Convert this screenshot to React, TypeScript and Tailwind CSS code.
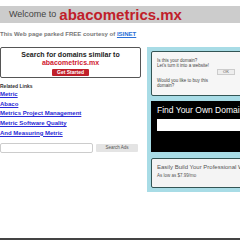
import React from 'react'

const links = ['Metric', 'Abaco', 'Metrics Project Management', 'Metric Software Quality', 'And Measuring Metric']

const App = () => {
    return (
        <div className="w-[240px] h-[240px] overflow-hidden bg-white relative" style={{ fontFamily: '"Liberation Sans", Arial, sans-serif' }}>
            <div className="w-[420px]">
                <div className="mt-[6px] h-[17px] bg-[#cccccc] flex items-center pl-[9px]">
                    <span className="text-[9px] text-[#444] leading-none">Welcome to</span>
                    <span className="text-[15px] font-bold text-[#c0202a] leading-none ml-[3px]">abacometrics.mx</span>
                </div>
                <div className="mt-[8px] text-[6px] font-bold text-[#777] leading-none">
                    This Web page parked FREE courtesy of <a href="#" className="text-[#2a6fd6] underline">ISINET</a>
                </div>
                <div className="flex mt-[10px]">
                    <div className="w-[141px] shrink-0">
                        <div className="h-[31px] border border-[#555] rounded-[2px] flex flex-col items-center pt-[3px]">
                            <span className="text-[7px] font-bold text-[#222] leading-[8px]">Search for domains similar to</span>
                            <span className="text-[7px] font-bold text-[#d02030] leading-[8px]">abacometrics.mx</span>
                            <button type="button" className="mt-[2px] bg-[#c0202a] text-white text-[5px] font-bold rounded-[1px] px-[5px] h-[7px] leading-none">Get Started</button>
                        </div>
                        <div className="mt-[6px] text-[5px] font-bold text-[#333] leading-none">Related Links</div>
                        <div className="flex flex-col gap-[3.7px] mt-[2px]">
                            {links.map((l) => (
                                <a key={l} href="#" className="text-[6px] font-bold text-[#2a2ad6] underline leading-[6px]">{l}</a>
                            ))}
                        </div>
                        <div className="flex items-center mt-[7px] gap-[3px]">
                            <div className="w-[93px] h-[10px] border border-[#ccc] rounded-[2px] bg-white" />
                            <button type="button" className="w-[42px] h-[8px] bg-[#e4e4e4] text-[4.5px] text-[#555] leading-none rounded-[1px]">Search Ads</button>
                        </div>
                    </div>
                    <div className="ml-[6px] w-[260px] h-[145px] bg-[#a8dce6] pt-[4px] pl-[4px]">
                        <div className="h-[45px] bg-[#f6f6f6] border border-[#355] rounded-[2px] pl-[5px] pt-[6px] text-[4.5px] text-[#444] leading-[5px] relative">
                            <div>Is this your domain?</div>
                            <div>Let's turn it into a website!</div>
                            <button type="button" className="absolute left-[65px] top-[17px] w-[18px] h-[6px] bg-[#eee] border border-[#ccc] text-[4px] text-[#555] leading-none">OK</button>
                            <div className="mt-[10px]">Would you like to buy this</div>
                            <div>domain?</div>
                        </div>
                        <div className="mt-[5px] h-[51px] bg-black pl-[6px] pt-[3px]">
                            <div className="text-[8.5px] text-white leading-[12px] whitespace-nowrap">Find Your Own Domain</div>
                            <div className="mt-[3px] h-[12px] bg-white" />
                        </div>
                        <div className="mt-[6px] h-[30px] bg-[#f4f4f4] border border-[#355] rounded-[2px] pl-[5px] pt-[4px]">
                            <div className="text-[6px] text-[#555] leading-[8px] whitespace-nowrap">Easily Build Your Professional Website</div>
                            <div className="mt-[3px] text-[4.5px] text-[#555] leading-none">As low as $7.99/mo</div>
                        </div>
                    </div>
                </div>
            </div>
            <div className="absolute left-0 bottom-0 w-full h-[2px] bg-[#444]" />
        </div>
    )
}

export default App
